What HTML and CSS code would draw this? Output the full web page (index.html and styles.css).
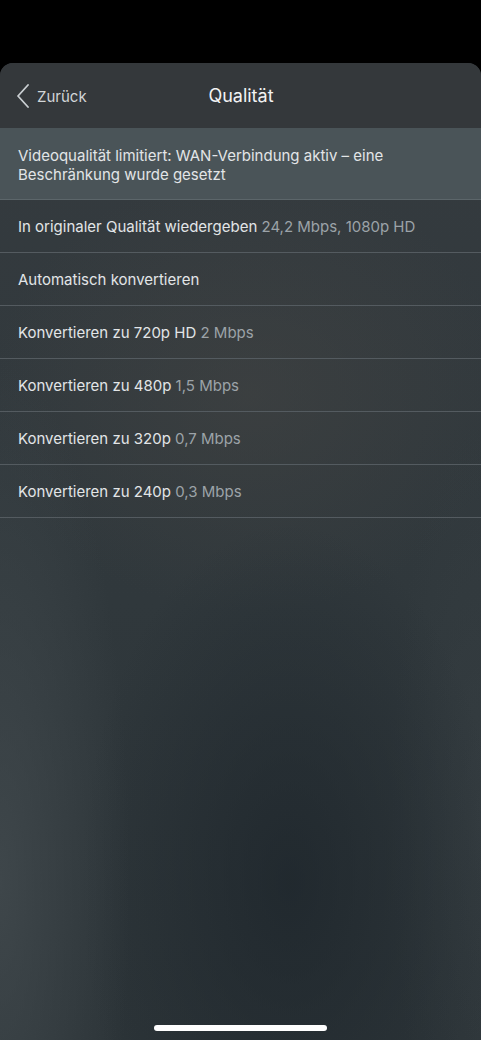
FILE: index.html
```html
<!DOCTYPE html>
<html lang="de">
<head>
    <meta charset="UTF-8">
    <meta name="viewport" content="width=device-width, initial-scale=1.0">
    <title>Qualität</title>
    <link rel="stylesheet" href="styles.css">
</head>
<body>
    <div class="sheet">
        <header class="nav">
            <div class="back">
                <svg class="chevron" width="14" height="24" viewBox="0 0 14 24">
                    <path d="M12 1 L2 12 L12 23" fill="none" stroke="#c9ced1" stroke-width="1.8" stroke-linecap="round" stroke-linejoin="round"/>
                </svg>
                <span>Zurück</span>
            </div>
            <h1 class="title">Qualität</h1>
        </header>
        <div class="notice">Videoqualität limitiert: WAN-Verbindung aktiv – eine Beschränkung wurde gesetzt</div>
        <ul class="options">
            <li>In originaler Qualität wiedergeben <span class="meta">24,2 Mbps, 1080p HD</span></li>
            <li>Automatisch konvertieren</li>
            <li>Konvertieren zu 720p HD <span class="meta">2 Mbps</span></li>
            <li>Konvertieren zu 480p <span class="meta">1,5 Mbps</span></li>
            <li>Konvertieren zu 320p <span class="meta">0,7 Mbps</span></li>
            <li>Konvertieren zu 240p <span class="meta">0,3 Mbps</span></li>
        </ul>
        <div class="home-bar"></div>
    </div>
</body>
</html>
```

FILE: styles.css
```css
html, body {
    margin: 0;
    padding: 0;
    background-color: #000;
}
body {
    font-family: 'Inter', 'Roboto', sans-serif;
    color: #e2e5e7;
    padding-top: 63px;
}
.sheet {
    height: 977px;
    border-radius: 13px 13px 0 0;
    overflow: hidden;
    display: flex;
    flex-direction: column;
    background-color: #30383c;
    background-image:
        radial-gradient(ellipse 130px 520px at 0px 820px, rgba(68, 76, 80, 0.75), transparent),
        radial-gradient(ellipse 210px 360px at 290px 820px, rgba(28, 36, 42, 0.7), transparent),
        radial-gradient(ellipse 90px 400px at 481px 760px, rgba(58, 66, 70, 0.5), transparent),
        radial-gradient(ellipse 260px 220px at 250px 330px, rgba(70, 70, 68, 0.45), transparent),
        linear-gradient(180deg, #353b3f 0%, #30383c 55%, #2c3438 100%);
}
.nav {
    height: 65px;
    display: flex;
    align-items: center;
    justify-content: center;
    position: relative;
    background-color: #34383b;
}
.back {
    position: absolute;
    left: 16px;
    top: 21px;
    display: flex;
    align-items: center;
    gap: 7px;
    font-size: 15px;
    color: #d2d6d8;
}
.title {
    margin: 0;
    font-size: 18px;
    font-weight: 400;
    color: #f2f3f4;
    margin-left: 1px;
}
.notice {
    background-color: #4a5458;
    padding: 18px 30px 15px 18px;
    font-size: 15px;
    line-height: 19px;
    border-bottom: 1px solid #5c666a;
}
.options {
    list-style: none;
    margin: 0;
    padding: 0;
}
.options li {
    height: 52px;
    display: flex;
    align-items: center;
    padding-left: 18px;
    font-size: 15px;
    border-bottom: 1px solid #545b60;
    white-space: pre;
}
.meta {
    color: #9ca3a8;
}
.home-bar {
    margin-top: auto;
    margin-bottom: 9px;
    align-self: center;
    width: 173px;
    height: 6px;
    border-radius: 3px;
    background-color: #fff;
}
```
